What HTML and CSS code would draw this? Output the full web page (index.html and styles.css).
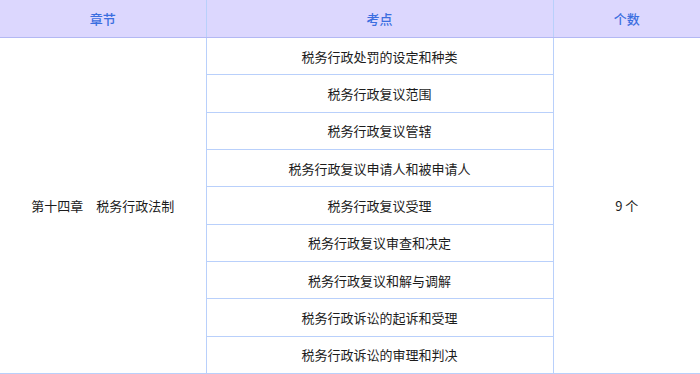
FILE: index.html
```html
<!DOCTYPE html>
<html lang="zh">
<head>
<meta charset="utf-8">
<link rel="stylesheet" href="styles.css">
</head>
<body>
<table class="tbl">
  <colgroup>
    <col class="c1"><col class="c2"><col class="c3">
  </colgroup>
  <thead>
    <tr><th>章节</th><th>考点</th><th>个数</th></tr>
  </thead>
  <tbody>
    <tr><td rowspan="9">第十四章　税务行政法制</td><td>税务行政处罚的设定和种类</td><td rowspan="9">9 个</td></tr>
    <tr><td>税务行政复议范围</td></tr>
    <tr><td>税务行政复议管辖</td></tr>
    <tr><td>税务行政复议申请人和被申请人</td></tr>
    <tr><td>税务行政复议受理</td></tr>
    <tr><td>税务行政复议审查和决定</td></tr>
    <tr><td>税务行政复议和解与调解</td></tr>
    <tr><td>税务行政诉讼的起诉和受理</td></tr>
    <tr><td>税务行政诉讼的审理和判决</td></tr>
  </tbody>
</table>
</body>
</html>
```
FILE: styles.css
```css
html, body {
  margin: 0;
  padding: 0;
  background: #fff;
}
body {
  font-family: "Noto Sans CJK SC", "Noto Sans", sans-serif;
  font-size: 13px;
  color: #1c1c1c;
}
.tbl {
  width: 700px;
  height: 374px;
  border-collapse: collapse;
  table-layout: fixed;
}
.c1 { width: 206px; }
.c2 { width: 347px; }
.c3 { width: 147px; }
.tbl th {
  background: #dcd7fe;
  color: #3b6ee0;
  font-weight: 500;
  height: 37px;
  padding: 0;
  border-left: 1px solid #b9d0fb;
  border-bottom: 1px solid #b3b8f4;
}
.tbl th:first-child { border-left: none; }
.tbl td {
  text-align: center;
  vertical-align: middle;
  padding: 0;
  border-left: 1px solid #b9d0fb;
  border-bottom: 1px solid #b9d0fb;
}
.tbl tbody tr:first-child td:first-child { border-left: none; }
```
